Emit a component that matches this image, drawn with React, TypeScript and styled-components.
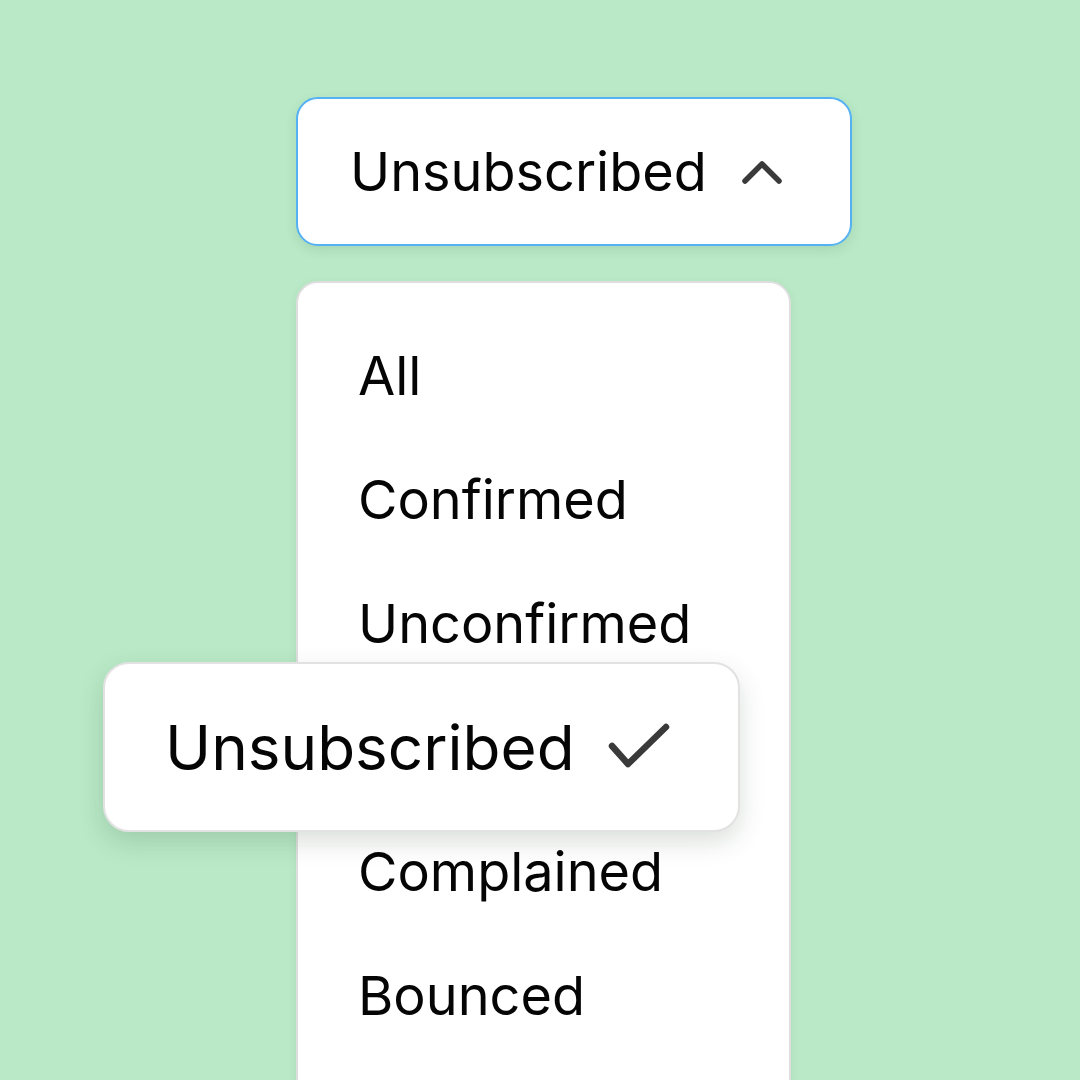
import React from 'react';
import styled, { createGlobalStyle } from 'styled-components';

const GlobalStyle = createGlobalStyle`
  html, body {
    margin: 0;
    padding: 0;
    background: #b9e9c6;
  }
  body {
    font-family: Inter, "Noto Sans", "Liberation Sans", sans-serif;
    -webkit-font-smoothing: antialiased;
  }
`;

const Page = styled.main`
  width: 1080px;
  height: 1080px;
  overflow: hidden;
  background: #b9e9c6;
  display: flex;
  flex-direction: column;
  align-items: flex-start;
  padding: 97px 0 0 296px;
  box-sizing: border-box;
`;

const Trigger = styled.button`
  flex-shrink: 0;
  display: flex;
  align-items: center;
  gap: 35px;
  height: 149px;
  width: 556px;
  box-sizing: border-box;
  padding: 0 0 0 52px;
  background: #fff;
  border: 2px solid #55b1f3;
  border-radius: 22px;
  box-shadow: 0 4px 12px rgba(40, 80, 50, 0.12);
  font-family: inherit;
  font-size: 54px;
  color: #050505;
  cursor: pointer;
`;

const Menu = styled.ul`
  flex-shrink: 0;
  position: relative;
  list-style: none;
  margin: 35px 0 0;
  padding: 31px 0 0;
  width: 495px;
  height: 900px;
  box-sizing: border-box;
  background: #fff;
  border: 2px solid #dedede;
  border-radius: 22px;
  box-shadow: 0 2px 8px rgba(40, 80, 50, 0.08);
`;

const Item = styled.li<{ $hidden?: boolean }>`
  height: 124px;
  line-height: 124px;
  padding-left: 60px;
  font-size: 54px;
  color: #050505;
  visibility: ${(p) => (p.$hidden ? 'hidden' : 'visible')};
`;

const Selected = styled.div`
  position: absolute;
  left: -195px;
  top: 379px;
  width: 637px;
  height: 170px;
  box-sizing: border-box;
  display: flex;
  align-items: center;
  gap: 33px;
  padding-left: 60px;
  background: #fff;
  border: 2px solid #e2e2e2;
  border-radius: 26px;
  box-shadow: 0 10px 26px rgba(30, 60, 40, 0.16);
  font-size: 62px;
  color: #050505;
`;

const ChevronUp = () => (
  <svg width="40" height="28" viewBox="0 0 40 28" fill="none">
    <polyline
      points="3,23 20,6 37,23"
      stroke="#3a3a3a"
      strokeWidth="5.5"
      strokeLinecap="round"
      strokeLinejoin="round"
    />
  </svg>
);

const Check = () => (
  <svg width="62" height="48" viewBox="0 0 62 48" fill="none">
    <polyline
      points="4,23 20,41 58,4"
      stroke="#3a3a3a"
      strokeWidth="6.5"
      strokeLinecap="round"
      strokeLinejoin="round"
    />
  </svg>
);

const options = ['All', 'Confirmed', 'Unconfirmed', 'Unsubscribed', 'Complained', 'Bounced'];

export default function App() {
  const selected = 'Unsubscribed';
  return (
    <>
      <GlobalStyle />
      <Page>
        <Trigger>
          <span>{selected}</span>
          <ChevronUp />
        </Trigger>
        <Menu>
          {options.map((o) => (
            <Item key={o} $hidden={o === selected}>
              {o}
            </Item>
          ))}
          <Selected>
            <span>{selected}</span>
            <Check />
          </Selected>
        </Menu>
      </Page>
    </>
  );
}
